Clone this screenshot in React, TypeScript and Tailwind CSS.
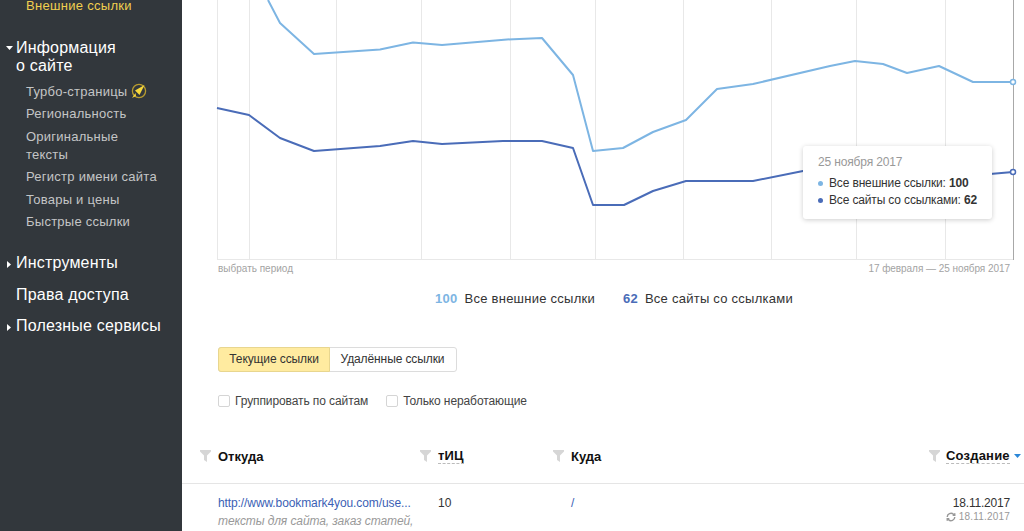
const light = "268,0 280,23 314,54 380,49.5 413,42.5 442,45 507,39.5 542,38 573,75 593,151 623,148 653,132 686,120 717,89 753,84 830,66 855,61 883,64 907,73 939,66 973,82 1013,82";
const dark = "217,108 249,115 280,138 314,151 380,146 413,141 442,144 503,141 542,141 573,148 593,205 624,205 653,191 686,181 753,181 803,171 855,168 990,174 1013,172";
const grid = [249, 336, 421, 510, 595, 683, 771, 856, 945];

function Funnel() {
  return (
    <svg width="11" height="12" viewBox="0 0 11 12" className="shrink-0">
      <path d="M0 0H11V1.5L7 5.5V12L4 10V5.5L0 1.5Z" fill="#d6d6d6" />
    </svg>
  );
}

function Rocket() {
  return (
    <svg width="17" height="17" viewBox="0 0 17 17" className="ml-[3px] shrink-0">
      <circle cx="9" cy="8" r="6.6" fill="none" stroke="#b89c30" strokeWidth="1.3" />
      <path d="M14.5 2L5 7.5L9.5 12Z" fill="#f7d83c" />
      <path d="M5.5 10L2 15L6 13Z" fill="#f7d83c" />
    </svg>
  );
}

function Caret({ open }: { open?: boolean }) {
  return (
    <span className="w-[16px] flex justify-center shrink-0 pt-[7px] pl-[2px]">
      {open ? (
        <svg width="7" height="4" viewBox="0 0 7 4"><path d="M0 0H7L3.5 4Z" fill="#fff" /></svg>
      ) : (
        <svg width="4" height="7" viewBox="0 0 4 7"><path d="M0 0V7L4 3.5Z" fill="#fff" /></svg>
      )}
    </span>
  );
}

function Section({ caret, open, children, className }: { caret?: boolean; open?: boolean; children: React.ReactNode; className?: string }) {
  return (
    <div className={"flex text-white text-[16px] tracking-[0.2px] leading-[18px] " + (className ?? "")}>
      {caret ? <Caret open={open} /> : <span className="w-[16px] shrink-0" />}
      <span>{children}</span>
    </div>
  );
}

function Check({ label }: { label: string }) {
  return (
    <label className="flex items-center gap-[5px]">
      <span className="w-[12px] h-[12px] rounded-[2px] border border-[#d5d5d5] bg-white" />
      <span>{label}</span>
    </label>
  );
}

function Head({ label, dashed }: { label: string; dashed?: boolean }) {
  return (
    <span className={"text-[13px] font-bold text-[#111] leading-[15px] " + (dashed ? "border-b border-dashed border-[#bbb] tracking-[0.2px]" : "")}>
      {label}
    </span>
  );
}

export default function App() {
  return (
    <div className="w-[1024px] h-[531px] overflow-hidden flex bg-white font-['Liberation_Sans',Arial,sans-serif]">
      <aside className="w-[182px] shrink-0 h-full bg-[#32373c] overflow-hidden">
        <div className="pl-[26px] text-[13px] tracking-[0.3px] leading-[18px] text-[#f0cf4f] mt-[-3px]">Внешние ссылки</div>
        <Section caret open className="mt-[24px] w-[140px]">Информация<br />о сайте</Section>
        <ul className="mt-[7.7px] pl-[26px] pr-[10px] text-[13px] tracking-[0.25px] leading-[18px] text-[#c4c5c6] flex flex-col gap-[4.56px]">
          <li className="flex items-center h-[18px]">Турбо-страницы<Rocket /></li>
          <li>Региональность</li>
          <li className="w-[110px]">Оригинальные тексты</li>
          <li>Регистр имени сайта</li>
          <li>Товары и цены</li>
          <li>Быстрые ссылки</li>
        </ul>
        <Section caret className="mt-[23px]">Инструменты</Section>
        <Section className="mt-[14px]">Права доступа</Section>
        <Section caret className="mt-[13px]">Полезные сервисы</Section>
      </aside>

      <main className="flex-1 min-w-0 flex flex-col">
        <div className="relative h-[260px] shrink-0">
          <svg width="842" height="260" viewBox="182 0 842 260" className="block">
            <g stroke="#e8e8e8" strokeWidth="1">
              {grid.map((x) => (
                <line key={x} x1={x + 0.5} y1="0" x2={x + 0.5} y2="260" />
              ))}
              <line x1="217.5" y1="0" x2="217.5" y2="260" />
              <line x1="217" y1="259.5" x2="1013" y2="259.5" />
            </g>
            <line x1="1013.5" y1="0" x2="1013.5" y2="260" stroke="#a8a8a8" />
            <polyline points={light} fill="none" stroke="#7db5e3" strokeWidth="2" strokeLinejoin="round" />
            <polyline points={dark} fill="none" stroke="#4a6cb8" strokeWidth="2" strokeLinejoin="round" />
            <circle cx="1013" cy="82" r="2.5" fill="#fff" stroke="#7db5e3" strokeWidth="1.5" />
            <circle cx="1013" cy="172" r="2.5" fill="#fff" stroke="#4a6cb8" strokeWidth="1.5" />
          </svg>
          <div className="absolute left-[621px] top-[146px] w-[189px] h-[73px] bg-white rounded-[3px] shadow-[0_1px_5px_rgba(0,0,0,0.2)] pl-[15px] pt-[9px] text-[12px] tracking-[-0.15px] text-[#333]">
            <div className="text-[#999] leading-[14px]">25 ноября 2017</div>
            <div className="mt-[5.5px] flex items-center gap-[6px] leading-[17px]">
              <span className="w-[5px] h-[5px] rounded-full bg-[#7db5e3]" />
              <span>Все внешние ссылки: <b>100</b></span>
            </div>
            <div className="flex items-center gap-[6px] leading-[17px]">
              <span className="w-[5px] h-[5px] rounded-full bg-[#4a6cb8]" />
              <span>Все сайты со ссылками: <b>62</b></span>
            </div>
          </div>
        </div>

        <div className="flex justify-between pl-[36px] pr-[14px] text-[10px] leading-[12px] text-[#a3a3a3] mt-[3px]">
          <span>выбрать период</span>
          <span className="tracking-[-0.05px]">17 февраля — 25 ноября 2017</span>
        </div>

        <div className="flex justify-center pl-[22px] mt-[16px] gap-[28px] text-[13px] tracking-[0.25px] leading-[16px] text-[#333]">
          <span><b className="text-[#7db5e3] mr-[7px]">100</b>Все внешние ссылки</span>
          <span><b className="text-[#4a6cb8] mr-[7px]">62</b>Все сайты со ссылками</span>
        </div>

        <div className="flex ml-[36px] mt-[40px] h-[25px] w-[239px] text-[12px] tracking-[-0.1px] text-[#333] rounded-[3px] border border-[#dcdcdc]">
          <div className="w-[112px] bg-[#ffeba0] border border-[#e8d68f] rounded-l-[3px] m-[-1px] pb-[1px] flex items-center justify-center">Текущие ссылки</div>
          <div className="flex-1 flex items-center justify-center pb-[1px]">Удалённые ссылки</div>
        </div>

        <div className="flex ml-[36px] mt-[22px] gap-[18px] text-[12px] tracking-[-0.1px] leading-[14px] text-[#444]">
          <Check label="Группировать по сайтам" />
          <Check label="Только неработающие" />
        </div>

        <div className="grid grid-cols-[220px_133px_376px_1fr] pl-[18px] pr-[3px] h-[42px] mt-[27px] items-center border-b border-[#e5e5e5] box-content pb-[6px]">
          <div className="flex items-center gap-[7px]"><Funnel /><Head label="Откуда" /></div>
          <div className="flex items-center gap-[7px]"><Funnel /><Head label="тИЦ" dashed /></div>
          <div className="flex items-center gap-[7px]"><Funnel /><Head label="Куда" /></div>
          <div className="flex items-center gap-[6px]">
            <Funnel /><Head label="Создание" dashed />
            <svg width="7" height="4" viewBox="0 0 7 4" className="ml-[-2px]"><path d="M0 0H7L3.5 4Z" fill="#2b87d8" /></svg>
          </div>
        </div>

        <div className="grid grid-cols-[220px_133px_376px_1fr] pl-[18px] pr-[14px] pt-[12px] text-[12px] leading-[14px] text-[#333]">
          <div className="pl-[18px]">
            <div className="text-[#3b5fb5] tracking-[-0.1px] whitespace-nowrap">http://www.bookmark4you.com/use...</div>
            <div className="italic text-[#999] mt-[4px] tracking-[-0.1px] whitespace-nowrap">тексты для сайта, заказ статей,</div>
          </div>
          <div className="pl-[18px]">10</div>
          <div className="pl-[18px] text-[#3b5fb5]">/</div>
          <div className="text-right">
            <div className="tracking-[-0.2px]">18.11.2017</div>
            <div className="flex justify-end items-center gap-[3px] text-[10px] text-[#999] tracking-[0.2px]">
              <svg width="10" height="10" viewBox="0 0 24 24" fill="none" stroke="#999" strokeWidth="3.5">
                <path d="M3 12a9 9 0 0 1 15-6.7L21 8M21 3v5h-5M21 12a9 9 0 0 1-15 6.7L3 16M3 21v-5h5" />
              </svg>
              18.11.2017
            </div>
          </div>
        </div>
      </main>
    </div>
  );
}
